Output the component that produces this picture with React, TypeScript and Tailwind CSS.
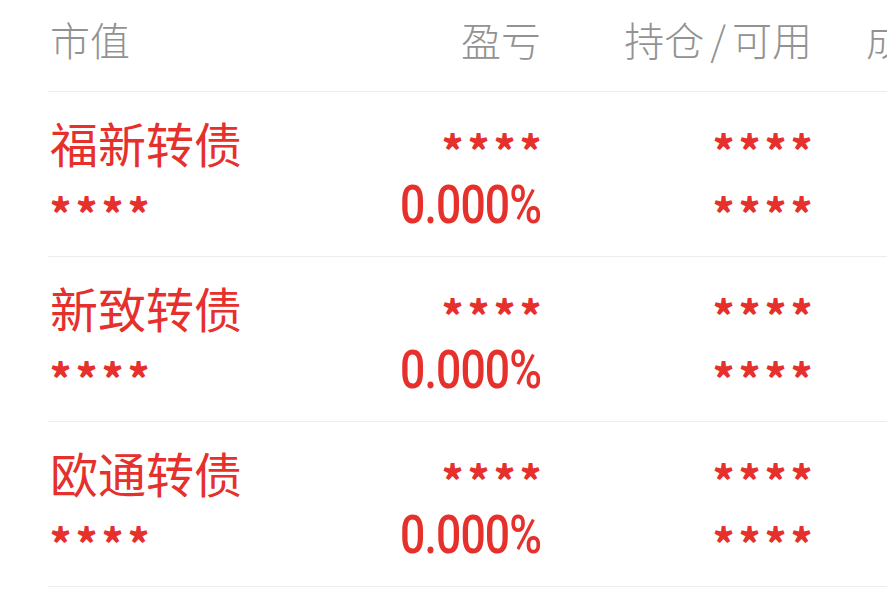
import React from "react";

const rows = ["福新转债", "新致转债", "欧通转债"];

const cjk = { fontFamily: '"Noto Sans CJK SC", "Noto Sans", sans-serif' };
const num = { fontFamily: 'Roboto, "Noto Sans CJK SC", sans-serif' };

function Stars({ right = false }: { right?: boolean }) {
  return (
    <span className={`flex h-[50px] items-center gap-[9px] text-[#e5302c] ${right ? "pr-[4px]" : ""}`}>
      {[0, 1, 2, 3].map((i) => (
        <span
          key={i}
          className="block w-[17px] text-center text-[40px] leading-none translate-y-[7px] font-black"
          style={cjk}
        >
          *
        </span>
      ))}
    </span>
  );
}

export default function App() {
  return (
    <div className="w-[887px] h-[592px] overflow-hidden bg-white" style={cjk}>
      <div className="pl-[48px]">
        {/* header */}
        <div className="flex h-[92px] items-center pb-[14px] border-b border-[#ececec] text-[40px] font-light text-[#929292] whitespace-nowrap">
          <div className="w-[290px] shrink-0 pl-[2px]">市值</div>
          <div className="w-[203px] shrink-0 text-right">盈亏</div>
          <div className="w-[271px] shrink-0 text-right">
            持仓<span className="mx-[6px]">/</span>可用
          </div>
          <div className="ml-[54px] shrink-0">成本/现价</div>
        </div>

        {rows.map((name) => (
          <div key={name} className="flex h-[165px] border-b border-[#ececec] pt-[25px] text-[#e5302c]">
            <div className="flex w-[290px] shrink-0 flex-col gap-[13px] pl-[2px]">
              <div className="flex h-[50px] items-center text-[48px] leading-none">{name}</div>
              <Stars />
            </div>
            <div className="flex w-[203px] shrink-0 flex-col items-end gap-[13px]">
              <Stars right />
              <div
                className="flex h-[50px] items-center text-[53px] font-medium leading-none tracking-[-1px] scale-x-[0.84] origin-right"
                style={num}
              >
                0.000%
              </div>
            </div>
            <div className="flex w-[271px] shrink-0 flex-col items-end gap-[13px]">
              <Stars right />
              <Stars right />
            </div>
          </div>
        ))}
      </div>
    </div>
  );
}
